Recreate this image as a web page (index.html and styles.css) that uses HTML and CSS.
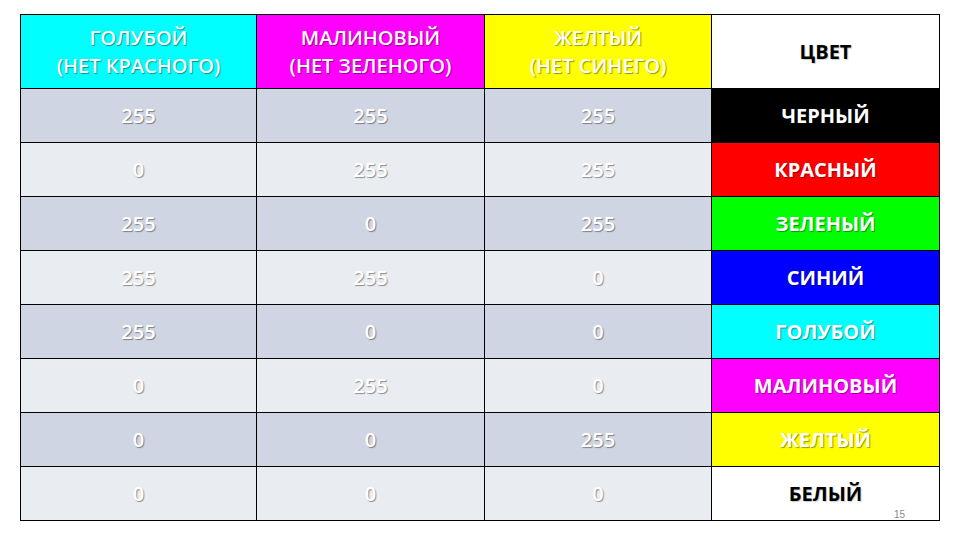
FILE: index.html
```html
<!DOCTYPE html>
<html lang="ru">
<head>
<meta charset="utf-8">
<link rel="stylesheet" href="styles.css">
</head>
<body>
<div class="slide">
  <table class="grid">
    <colgroup>
      <col class="c1"><col class="c2"><col class="c3"><col class="c4">
    </colgroup>
    <thead>
      <tr class="head">
        <th class="cyan">ГОЛУБОЙ<br>(НЕТ КРАСНОГО)</th>
        <th class="magenta">МАЛИНОВЫЙ<br>(НЕТ ЗЕЛЕНОГО)</th>
        <th class="yellow">ЖЕЛТЫЙ<br>(НЕТ СИНЕГО)</th>
        <th class="white name-dark">ЦВЕТ</th>
      </tr>
    </thead>
    <tbody>
      <tr class="odd"><td>255</td><td>255</td><td>255</td><td class="name black">ЧЕРНЫЙ</td></tr>
      <tr class="even"><td>0</td><td>255</td><td>255</td><td class="name red">КРАСНЫЙ</td></tr>
      <tr class="odd"><td>255</td><td>0</td><td>255</td><td class="name green">ЗЕЛЕНЫЙ</td></tr>
      <tr class="even"><td>255</td><td>255</td><td>0</td><td class="name blue">СИНИЙ</td></tr>
      <tr class="odd"><td>255</td><td>0</td><td>0</td><td class="name cyan">ГОЛУБОЙ</td></tr>
      <tr class="even"><td>0</td><td>255</td><td>0</td><td class="name magenta">МАЛИНОВЫЙ</td></tr>
      <tr class="odd"><td>0</td><td>0</td><td>255</td><td class="name yellow">ЖЕЛТЫЙ</td></tr>
      <tr class="even"><td>0</td><td>0</td><td>0</td><td class="name white name-dark last">БЕЛЫЙ<span class="page">15</span></td></tr>
    </tbody>
  </table>
</div>
</body>
</html>
```
FILE: styles.css
```css
html, body {
  margin: 0;
  padding: 0;
  background: #ffffff;
}
.slide {
  width: 960px;
  height: 540px;
  padding: 14px 0 0 20px;
  box-sizing: border-box;
  font-family: "Open Sans", "Liberation Sans", sans-serif;
}
.grid {
  width: 919px;
  border-collapse: collapse;
  table-layout: fixed;
}
.c1 { width: 236px; }
.c2 { width: 228px; }
.c3 { width: 227px; }
.c4 { width: 228px; }
.grid th, .grid td {
  border: 1px solid #000;
  text-align: center;
  vertical-align: middle;
  padding: 0;
  color: #ffffff;
  text-shadow: 1px 1px 1px rgba(0, 0, 0, 0.4);
}
.grid th {
  height: 73px;
  font-size: 20px;
  font-weight: 600;
  line-height: 28px;
}
.grid td {
  height: 53px;
  font-size: 20px;
  font-weight: 600;
}
.odd td { background: #cfd5e3; }
.even td { background: #e9ecf1; }
.grid .name {
  font-weight: 700;
  font-size: 20px;
}
.grid .cyan { background: #00ffff; }
.grid .magenta { background: #ff00ff; }
.grid .yellow { background: #ffff00; }
.grid .white { background: #ffffff; }
.grid .black { background: #000000; }
.grid .red { background: #ff0000; }
.grid .green { background: #00ff00; }
.grid .blue { background: #0000ff; }
.grid .name-dark {
  color: #000000;
  font-weight: 700;
  text-shadow: 1px 1px 1px rgba(0, 0, 0, 0.2);
}
.last {
  position: relative;
}
.page {
  position: absolute;
  right: 34px;
  bottom: 0;
  font-size: 10px;
  font-weight: 400;
  color: #8a8a8a;
  text-shadow: none;
  font-family: "Liberation Sans", sans-serif;
}
```
